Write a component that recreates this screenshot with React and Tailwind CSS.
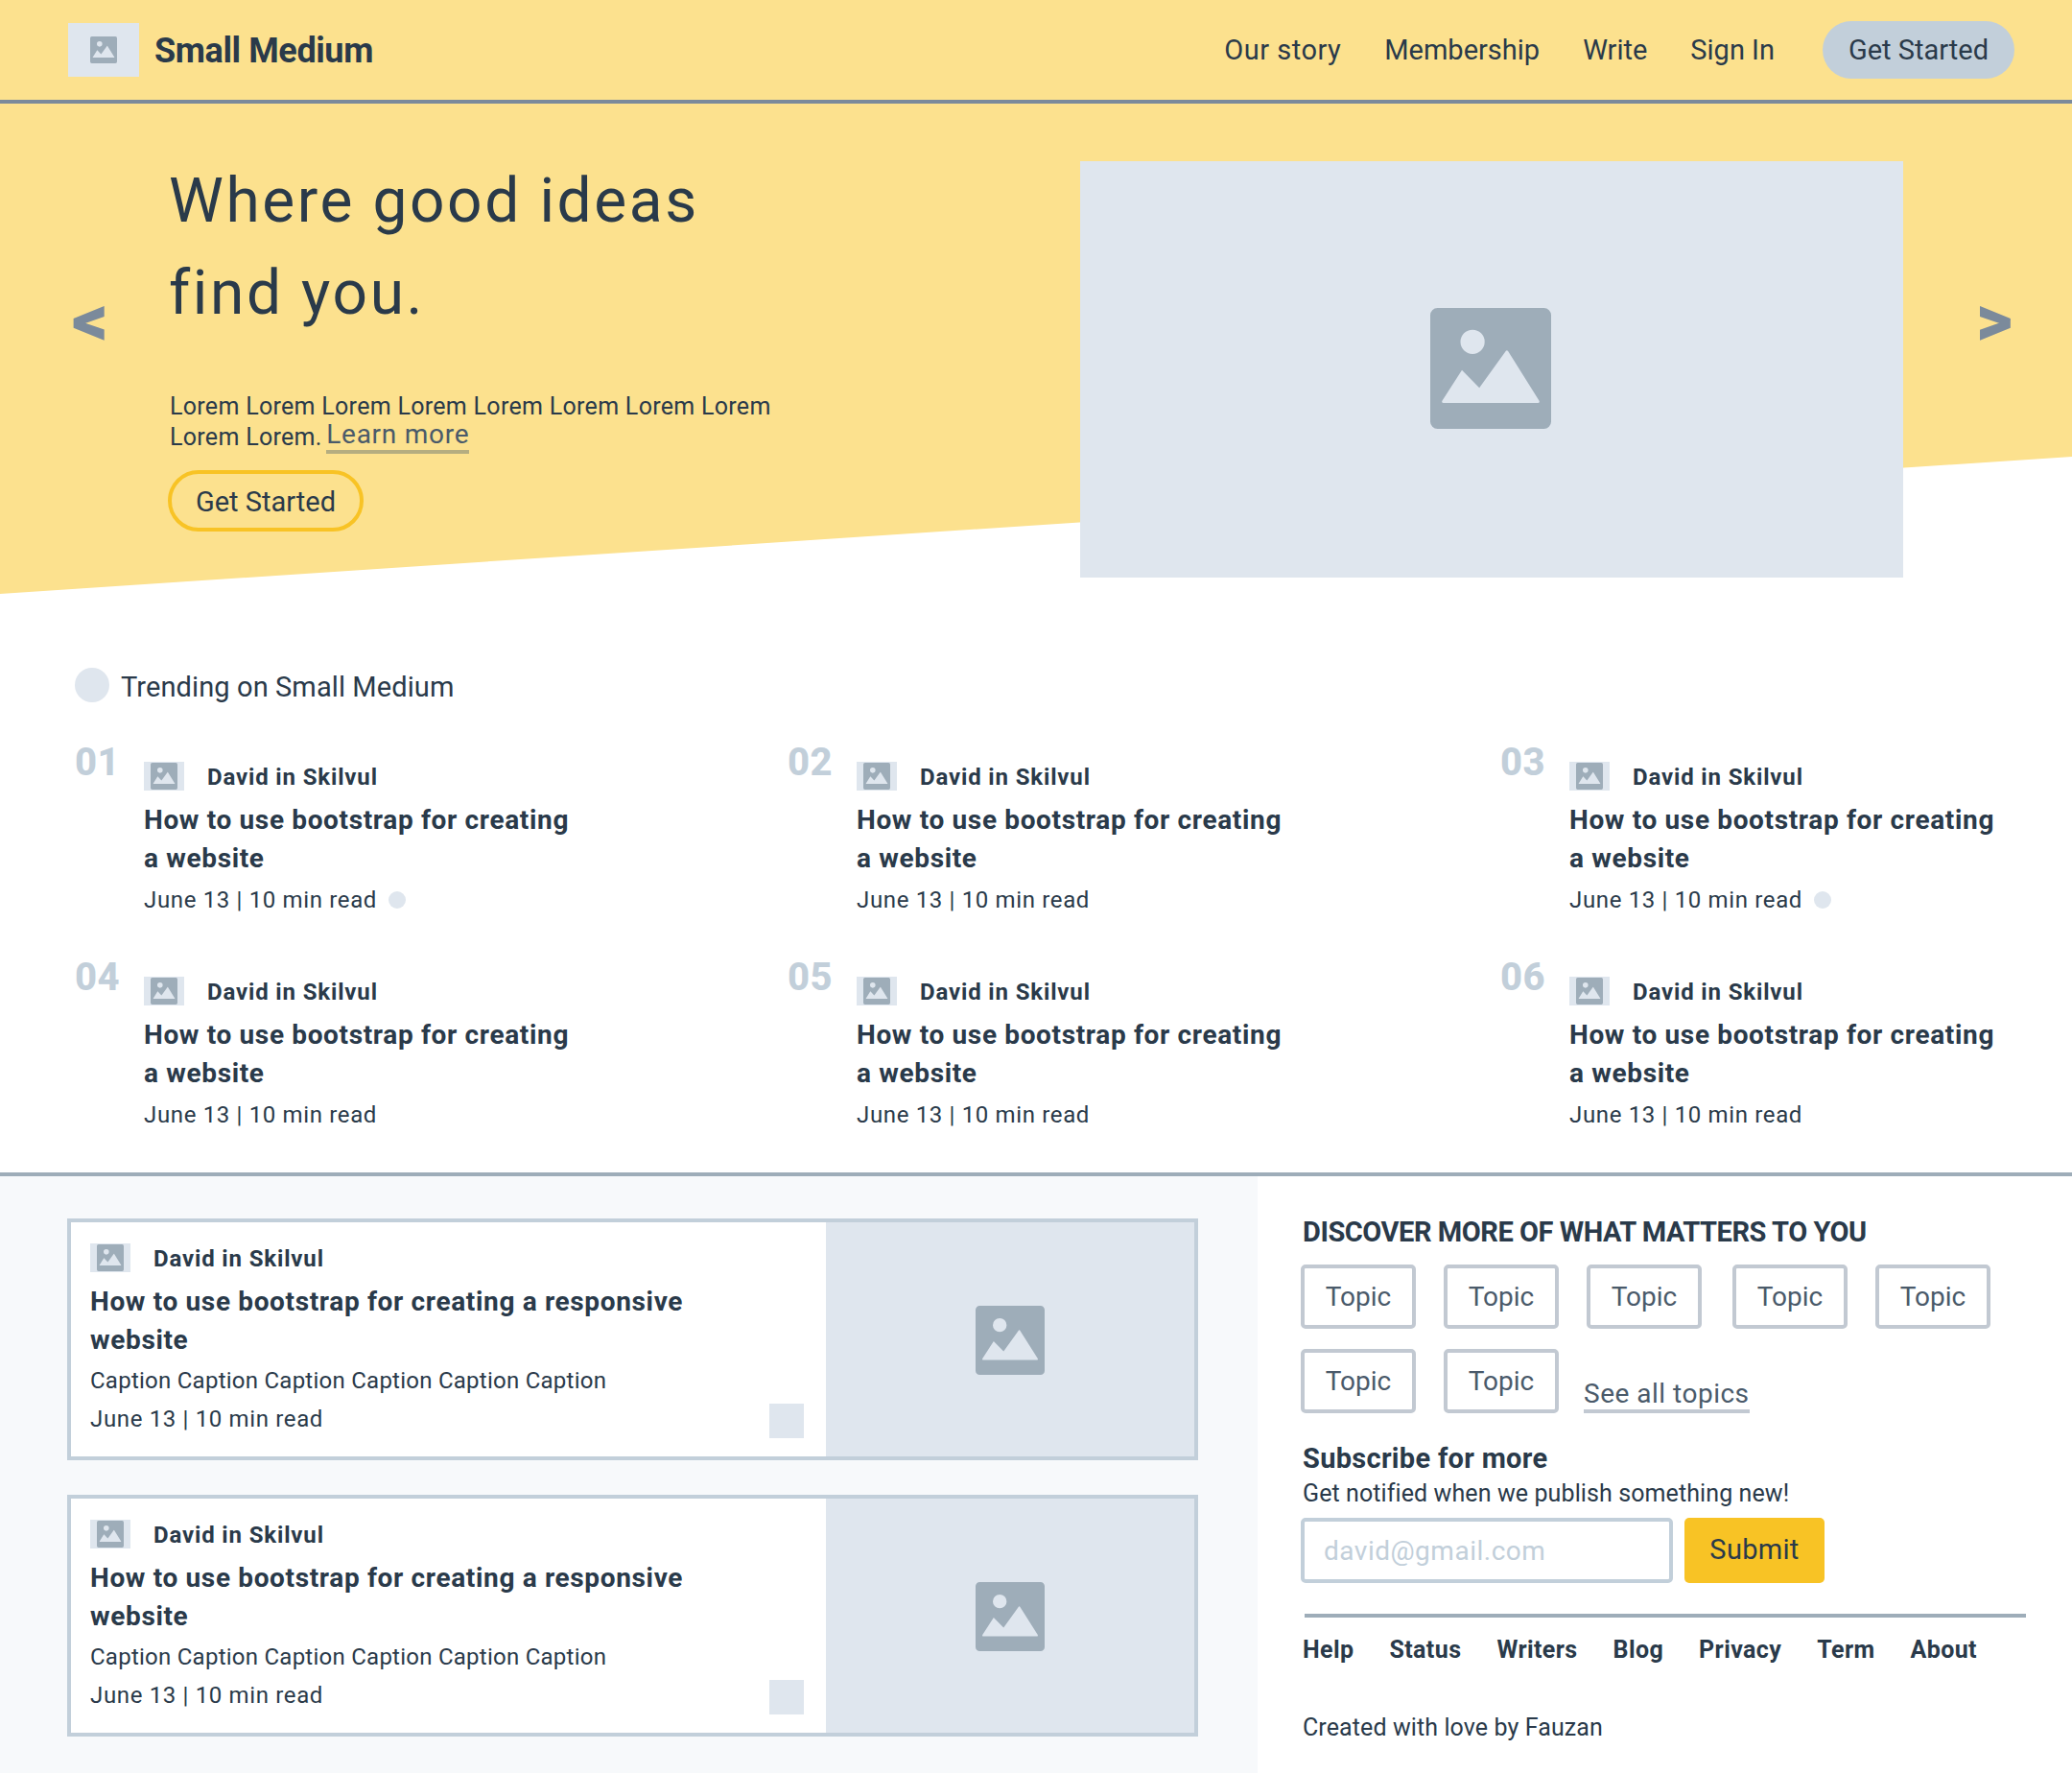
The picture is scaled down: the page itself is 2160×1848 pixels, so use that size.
import React from "react";

const Img = ({ className }) => (
  <svg viewBox="0 0 100 100" className={className} fill="currentColor">
    <path
      fillRule="evenodd"
      d="M6 0H94A6 6 0 0 1 100 6V94A6 6 0 0 1 94 100H6A6 6 0 0 1 0 94V6A6 6 0 0 1 6 0ZM35 18A10 10 0 1 0 35 38A10 10 0 1 0 35 18ZM62.6 35.5L40.6 66L26.2 51.3L10 76.5Q9 78.6 11 78.6H89Q91 78.6 90 76.5L64.5 36Q63.5 34.5 62.6 35.5Z"
    />
  </svg>
);

const Thumb = () => (
  <div className="w-[42px] h-[30px] -mt-[3px] bg-[#dfe6ee] flex items-center justify-center text-[#9eadb9] shrink-0">
    <Img className="w-[28px] h-[28px]" />
  </div>
);

const Author = () => (
  <div className="flex items-center gap-6 h-[30px]">
    <Thumb />
    <span className="text-[24px] font-bold tracking-[0.85px]">David in Skilvul</span>
  </div>
);

const Trend = ({ n, dot }) => (
  <div className="flex h-[224px]">
    <div className="w-[72px] text-[40px] leading-[50px] font-extrabold text-[#c2cfda] tracking-[0.5px] shrink-0">{n}</div>
    <div className="pt-[25px]">
      <Author />
      <div className="mt-[10px] text-[28px] leading-[40px] font-bold w-[450px] tracking-[0.65px]">How to use bootstrap for creating a website</div>
      <div className="mt-[3px] flex items-center gap-3 text-[24px] leading-[40px] tracking-[0.65px]">
        June 13 | 10 min read
        {dot && <span className="w-[18px] h-[18px] rounded-full bg-[#dfe6ee]" />}
      </div>
    </div>
  </div>
);

const Card = () => (
  <div className="flex h-[252px] border-4 border-[#c2cfda] bg-white">
    <div className="w-[787px] pl-[20px] pr-[20px] pt-[23px] relative shrink-0">
      <Author />
      <div className="mt-[10px] text-[28px] leading-[40px] font-bold w-[700px] tracking-[0.65px]">How to use bootstrap for creating a responsive website</div>
      <div className="mt-[2px] text-[24px] leading-[40px] tracking-[0.25px]">Caption Caption Caption Caption Caption Caption</div>
      <div className="text-[24px] leading-[40px] tracking-[0.65px]">June 13 | 10 min read</div>
      <div className="absolute right-[23px] bottom-[19px] w-[36px] h-[36px] bg-[#dfe6ee]" />
    </div>
    <div className="flex-1 pt-[2px] bg-[#dfe6ee] flex items-center justify-center text-[#9eadb9]">
      <Img className="w-[72px] h-[72px]" />
    </div>
  </div>
);

const Topic = ({ className = "" }) => (
  <div className={`w-[120px] h-[67px] pt-[1px] border-4 border-[#c2c9d2] rounded-[5px] flex items-center justify-center text-[28px] text-[#4a5a6a] ${className}`}>Topic</div>
);

export default function App() {
  return (
    <div className="w-[2160px] h-[1848px] overflow-hidden bg-white text-[#2a3a4a] font-['Roboto',sans-serif]">
      <nav className="h-[108px] bg-[#fce18e] border-b-4 border-[#7b8a9b] flex items-center pl-[71px] pr-[60px]">
        <div className="w-[74px] h-[56px] bg-[#dfe6ee] flex items-center justify-center text-[#9eadb9]">
          <Img className="w-[28px] h-[28px]" />
        </div>
        <span className="ml-[16px] pt-[2px] text-[36px] font-bold tracking-[-0.4px]">Small Medium</span>
        <div className="ml-auto flex items-center gap-[45px] text-[29px] pt-[2px]">
          <span className="tracking-[0.5px]">Our story</span>
          <span>Membership</span>
          <span>Write</span>
          <span>Sign In</span>
          <span className="w-[200px] h-[60px] ml-[5px] -mt-[2px] pt-[2px] rounded-full bg-[#c2cfda] flex items-center justify-center">Get Started</span>
        </div>
      </nav>

      <section className="relative h-[512px]">
        <div className="absolute inset-0 bg-[#fce18e] [clip-path:polygon(0_0,100%_0,100%_368px,0_511px)]" />
        <div className="relative flex h-full">
          <div className="w-[177px] pl-[75px] pt-[190px] text-[74px] leading-[72px] font-black text-[#7b8a9b] shrink-0">&lt;</div>
          <div className="w-[949px] pt-[54px] shrink-0">
            <h1 className="-ml-[1px] text-[64px] leading-[96px] tracking-[2.6px]">Where good ideas<br />find you.</h1>
            <p className="mt-[54px] w-[640px] text-[25px] leading-[31px] tracking-[0.3px]">
              Lorem Lorem Lorem Lorem Lorem Lorem Lorem Lorem Lorem Lorem.{" "}
              <span className="relative -top-[2px] -ml-[2px] text-[28px] tracking-[0.75px] text-[#4a5a6a] border-b-4 border-[#b5ad80]">Learn more</span>
            </p>
            <div className="mt-[19px] -ml-[2px] w-[204px] h-[64px] pt-[4px] border-4 border-[#f8c325] rounded-full flex items-center justify-center text-[29px]">Get Started</div>
          </div>
          <div className="mt-[60px] w-[858px] h-[434px] pr-[2px] pb-[2px] bg-[#dfe6ee] flex items-center justify-center text-[#9eadb9] shrink-0">
            <Img className="w-[126px] h-[126px]" />
          </div>
          <div className="pl-[76px] pt-[190px] text-[74px] leading-[72px] font-black text-[#7b8a9b]">&gt;</div>
        </div>
      </section>

      <section className="h-[602px] pl-[78px] pt-[76px]">
        <div className="flex items-center gap-3 h-[36px]">
          <span className="w-[36px] h-[36px] rounded-full bg-[#dfe6ee]" />
          <span className="pt-[5px] text-[29px] tracking-[0.1px]">Trending on Small Medium</span>
        </div>
        <div className="mt-[38px] grid grid-cols-[repeat(3,743px)]">
          <Trend n="01" dot />
          <Trend n="02" />
          <Trend n="03" dot />
          <Trend n="04" />
          <Trend n="05" />
          <Trend n="06" />
        </div>
      </section>

      <section className="flex h-[626px] border-t-4 border-[#9eadb9]">
        <div className="w-[1313px] bg-[#f7f9fb] pl-[70px] pr-[62px] pt-[44px] flex flex-col gap-[36px]">
          <Card />
          <Card />
        </div>
        <div className="pl-[45px] pr-[48px] pt-[38px] flex-1">
          <h2 className="pl-[2px] text-[29px] leading-[40px] font-bold uppercase tracking-[-0.45px]">Discover more of what matters to you</h2>
          <div className="mt-[14px] flex flex-wrap gap-x-[29px] gap-y-[21px]">
            <Topic /><Topic /><Topic /><Topic className="ml-[3px]" /><Topic /><Topic /><Topic />
            <span className="-ml-[3px] self-end h-[64px] flex items-end"><span className="text-[28px] text-[#4a5a6a] border-b-4 border-[#c2c9d2] leading-[33px] tracking-[0.5px]">See all topics</span></span>
          </div>
          <h3 className="mt-[27px] pl-[2px] text-[29px] leading-[40px] font-bold tracking-[0.3px]">Subscribe for more</h3>
          <p className="pl-[2px] text-[25px] leading-[34px] tracking-[0.1px]">Get notified when we publish something new!</p>
          <div className="mt-[8px] flex gap-[12px]">
            <input readOnly placeholder="david@gmail.com" className="w-[388px] h-[68px] border-4 border-[#c2cfda] rounded-[5px] px-[20px] text-[28px] placeholder:text-[#c2cfda] tracking-[0.5px] outline-none" />
            <div className="w-[146px] h-[68px] rounded-[5px] bg-[#f8c325] flex items-center justify-center text-[29px] tracking-[0.3px]">Submit</div>
          </div>
          <div className="mt-[32px] ml-[4px] h-[4px] bg-[#9eadb9] w-[752px]" />
          <div className="mt-[18px] pl-[2px] flex gap-[37px] text-[25px] leading-[32px] font-bold tracking-[0.4px]">
            <span>Help</span><span>Status</span><span>Writers</span><span>Blog</span><span>Privacy</span><span>Term</span><span>About</span>
          </div>
          <div className="mt-[49px] pl-[2px] text-[25px] leading-[32px] tracking-[0.1px]">Created with love by Fauzan</div>
        </div>
      </section>
    </div>
  );
}
